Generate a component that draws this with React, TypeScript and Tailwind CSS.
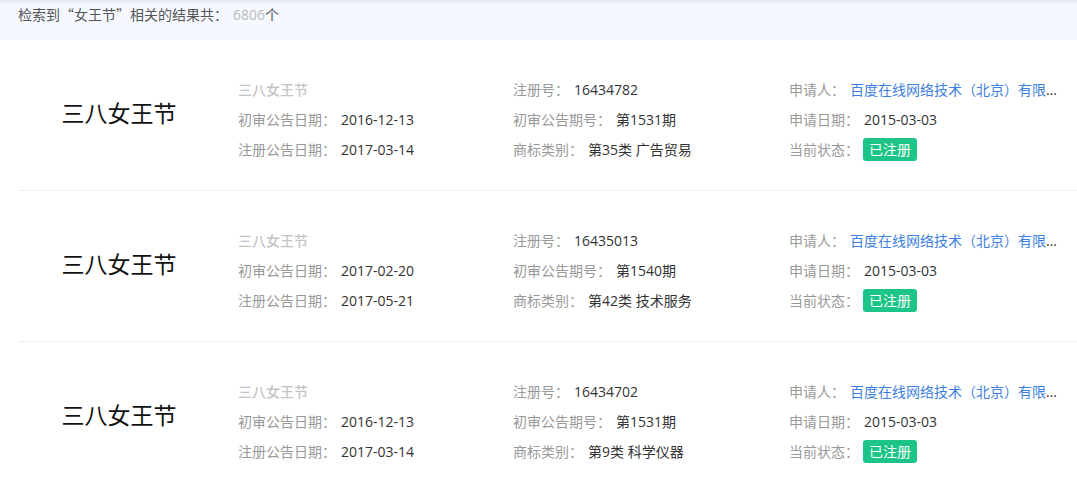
import React from "react";

interface Mark {
    name: string;
    regNo: string;
    firstDate: string;
    firstIssue: string;
    regDate: string;
    category: string;
    applicant: string;
    applyDate: string;
    status: string;
}

const marks: Mark[] = [
    {
        name: "三八女王节",
        regNo: "16434782",
        firstDate: "2016-12-13",
        firstIssue: "第1531期",
        regDate: "2017-03-14",
        category: "第35类 广告贸易",
        applicant: "百度在线网络技术（北京）有限公司",
        applyDate: "2015-03-03",
        status: "已注册",
    },
    {
        name: "三八女王节",
        regNo: "16435013",
        firstDate: "2017-02-20",
        firstIssue: "第1540期",
        regDate: "2017-05-21",
        category: "第42类 技术服务",
        applicant: "百度在线网络技术（北京）有限公司",
        applyDate: "2015-03-03",
        status: "已注册",
    },
    {
        name: "三八女王节",
        regNo: "16434702",
        firstDate: "2016-12-13",
        firstIssue: "第1531期",
        regDate: "2017-03-14",
        category: "第9类 科学仪器",
        applicant: "百度在线网络技术（北京）有限公司",
        applyDate: "2015-03-03",
        status: "已注册",
    },
];

function Field(props: { label: string; children: React.ReactNode }) {
    return (
        <div className="flex items-center h-[30px] whitespace-nowrap overflow-hidden">
            <span className="text-[#999] shrink-0">{props.label}：</span>
            <span className="ml-[5px] text-[#333] min-w-0 flex-1 overflow-hidden text-ellipsis">{props.children}</span>
        </div>
    );
}

export default function App() {
    return (
        <div
            className="w-[1077px] h-[479px] overflow-hidden bg-white text-[14px]"
            style={{ fontFamily: '"Open Sans", "Noto Sans CJK SC", sans-serif' }}
        >
            <div className="h-[40px] bg-[#f5f9ff] pl-[18px] pt-[4px] leading-[20px] text-[#555] shadow-[inset_0_5px_5px_-3px_rgba(0,0,0,0.08)]">
                <span style={{ fontFamily: '"Noto Sans CJK SC", sans-serif' }}>检索到“女王节”相关的结果共：</span>
                <span className="ml-[5px] text-[#bbb]">6806</span>个
            </div>

            <div className="pl-[19px] w-[1120px]">
                {marks.map((m, i) => (
                    <div key={i} className="flex h-[151px] border-b border-[#eee]">
                        <div className="w-[200px] pb-[4px] flex items-center justify-center text-[23px] text-[#111]">
                            {m.name}
                        </div>
                        <div className="ml-[19px] pt-[34px] flex">
                            <div className="w-[275px]">
                                <div className="h-[30px] flex items-center text-[#c4c4c4] font-medium">{m.name}</div>
                                <Field label="初审公告日期">{m.firstDate}</Field>
                                <Field label="注册公告日期">{m.regDate}</Field>
                            </div>
                            <div className="w-[276px]">
                                <Field label="注册号">{m.regNo}</Field>
                                <Field label="初审公告期号">{m.firstIssue}</Field>
                                <Field label="商标类别">{m.category}</Field>
                            </div>
                            <div className="w-[271px]">
                                <Field label="申请人">
                                    <span className="text-[#3d7fe0]">{m.applicant}</span>
                                </Field>
                                <Field label="申请日期">{m.applyDate}</Field>
                                <div className="flex items-center h-[30px]">
                                    <span className="text-[#999]">当前状态：</span>
                                    <span className="ml-[4px] h-[23px] px-[6px] rounded-[3px] bg-[#1dc487] text-white leading-[23px]">
                                        {m.status}
                                    </span>
                                </div>
                            </div>
                        </div>
                    </div>
                ))}
            </div>
        </div>
    );
}
